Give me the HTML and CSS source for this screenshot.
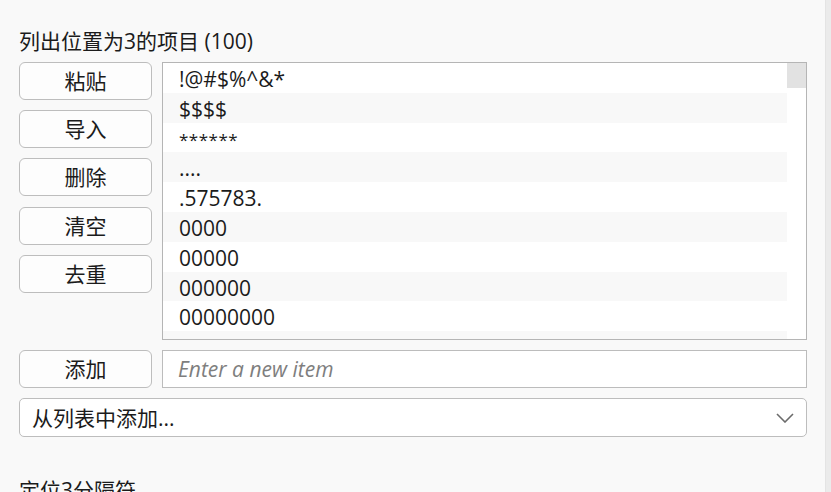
FILE: index.html
```html
<!DOCTYPE html>
<html lang="zh">
<head>
<meta charset="utf-8">
<title>列表</title>
<link rel="stylesheet" href="styles.css">
</head>
<body>
<div class="page">
  <div class="panel">
    <div class="title">列出位置为3的项目 (100)</div>
    <div class="main">
      <div class="actions">
        <button class="btn">粘贴</button>
        <button class="btn">导入</button>
        <button class="btn">删除</button>
        <button class="btn">清空</button>
        <button class="btn">去重</button>
      </div>
      <div class="listbox">
        <div class="items">
          <div class="item">!@#$%^&amp;*</div>
          <div class="item">$$$$</div>
          <div class="item item-small">******</div>
          <div class="item">....</div>
          <div class="item">.575783.</div>
          <div class="item">0000</div>
          <div class="item">00000</div>
          <div class="item">000000</div>
          <div class="item">00000000</div>
          <div class="item">000000000</div>
        </div>
        <div class="vscroll"><div class="thumb"></div></div>
      </div>
    </div>
    <div class="add-row">
      <button class="btn">添加</button>
      <input class="new-item" type="text" placeholder="Enter a new item">
    </div>
    <div class="dropdown">
      <span class="dropdown-label">从列表中添加...</span>
      <svg class="chevron" width="18" height="10" viewBox="0 0 18 10"><path d="M1 1 L9 9 L17 1" fill="none" stroke="#6b6b6b" stroke-width="1.6"/></svg>
    </div>
    <div class="section-label">定位3分隔符</div>
  </div>
  <div class="page-scroll"></div>
</div>
</body>
</html>
```
FILE: styles.css
```css
* { box-sizing: border-box; }
html, body {
  margin: 0;
  padding: 0;
  height: 100%;
  overflow: hidden;
  background: #f9f9f9;
}
body {
  font-family: "Open Sans", "Noto Sans CJK SC", sans-serif;
  font-size: 21px;
  color: #1b1b1b;
}
.page {
  display: flex;
  height: 100%;
}
.panel {
  flex: 1;
  padding: 27px 18px 0 19px;
}
.page-scroll {
  width: 6px;
  background: #ebebeb;
  border-left: 1px solid #e4e4e4;
}
.title {
  line-height: 28px;
  height: 28px;
}
.main {
  display: flex;
  gap: 10px;
  margin-top: 7px;
}
.actions {
  display: flex;
  flex-direction: column;
  gap: 10.2px;
  width: 133px;
  flex: none;
}
.btn {
  font: inherit;
  color: #1b1b1b;
  height: 38px;
  width: 133px;
  flex: none;
  background: #fdfdfd;
  border: 1px solid #bdbdbd;
  border-radius: 6px;
  padding: 0;
  line-height: 34px;
}
.listbox {
  flex: 1;
  height: 278px;
  border: 1px solid #b5b5b5;
  background: #fff;
  display: flex;
  overflow: hidden;
}
.items {
  flex: 1;
}
.item {
  height: 29.8px;
  padding: 3px 0 0 16px;
  line-height: 27px;
  white-space: nowrap;
  background: #fff;
}
.item:nth-child(even) {
  background: #f8f8f8;
}
.item-small {
  font-size: 17px;
  letter-spacing: 0.5px;
}
.vscroll {
  width: 19px;
  flex: none;
  background: #fff;
}
.thumb {
  height: 25px;
  background: #e2e2e2;
}
.add-row {
  display: flex;
  gap: 10px;
  margin-top: 10px;
}
.new-item {
  flex: 1;
  height: 38px;
  font: inherit;
  color: #1b1b1b;
  border: 1px solid #bcbcbc;
  background: #fff;
  padding: 0 15px;
  outline: none;
}
.new-item::placeholder {
  font-style: italic;
  color: #7e7e7e;
}
.dropdown {
  margin-top: 10px;
  height: 39px;
  border: 1px solid #bdbdbd;
  border-radius: 5px;
  background: #fff;
  display: flex;
  align-items: center;
  justify-content: space-between;
  padding: 0 12px 0 12px;
}
.dropdown-label {
  line-height: 28px;
}
.chevron {
  display: block;
}
.section-label {
  margin-top: 39px;
  line-height: 28px;
}
```
